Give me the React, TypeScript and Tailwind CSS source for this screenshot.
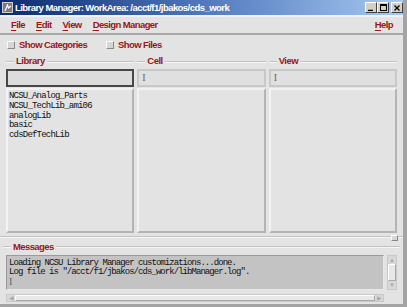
import React from 'react'

const menus = ['File', 'Edit', 'View', 'Design Manager']
const libraries = ['NCSU_Analog_Parts', 'NCSU_TechLib_ami06', 'analogLib', 'basic', 'cdsDefTechLib']
const messages = [
  'Loading NCSU Library Manager customizations...done.',
  'Log file is "/acct/f1/jbakos/cds_work/libManager.log".',
]

function Underlined({ text }: { text: string }) {
  return (
    <span>
      <span className="underline decoration-1 underline-offset-[2px]">{text[0]}</span>
      {text.slice(1)}
    </span>
  )
}

function Cursor() {
  return <span className="font-['Liberation_Serif',serif] text-[10px] leading-none text-[#666]">I</span>
}

function Groove({ className = '' }: { className?: string }) {
  return <div className={'h-[2px] border-t border-t-[#c2c2c2] border-b border-b-[#f6f6f6] ' + className} />
}

function Column({ label, focused, items }: { label: string; focused?: boolean; items?: string[] }) {
  return (
    <div className="flex-1 min-w-0 flex flex-col">
      <div className="h-[15px] flex items-center">
        <Groove className="w-[8px]" />
        <span className="px-[2px] text-[9.5px] font-bold tracking-[-0.5px] text-[#9b1616]">{label}</span>
        <Groove className="flex-1" />
      </div>
      <div
        className={
          focused
            ? 'h-[18px] border-2 border-[#474747] bg-[#dcdcdc]'
            : 'h-[18px] border-2 border-[#c8c8c8] bg-[#e0e0e0] flex items-center pl-[3px]'
        }
      >
        {!focused && <Cursor />}
      </div>
      <div className="flex-1 mt-[1px] border-2 border-t-[#f2f2f2] border-l-[#f2f2f2] border-r-[#b4b4b4] border-b-[#b4b4b4] bg-[#e3e3e3] pt-[2px] pl-[1px] font-['Liberation_Mono',monospace] text-[9px] tracking-[-0.8px] leading-[9.8px] text-[#111]">
        {items?.map((it) => (
          <div key={it}>{it}</div>
        ))}
      </div>
    </div>
  )
}

function CheckToggle({ label }: { label: string }) {
  return (
    <div className="flex items-center gap-[4px]">
      <div className="w-[8px] h-[8px] bg-[#d6d6d6] border border-t-[#fafafa] border-l-[#fafafa] border-r-[#8a8a8a] border-b-[#8a8a8a]" />
      <span>{label}</span>
    </div>
  )
}

function WinButton({ children }: { children: React.ReactNode }) {
  return (
    <div className="w-[12px] h-[11px] bg-[#d4d0c8] border border-t-white border-l-white border-r-[#404040] border-b-[#404040] flex items-center justify-center">
      {children}
    </div>
  )
}

export default function App() {
  return (
    <div className="w-[407px] h-[307px] flex flex-col bg-[#e3e3e3] border-r-[4px] border-r-[#a4a4a4] border-b-[3px] border-b-[#a4a4a4] font-['Liberation_Sans',Arial,sans-serif] overflow-hidden">
      {/* title bar */}
      <div className="h-[17px] shrink-0 flex items-center pl-[2px] bg-gradient-to-r from-[#0b2a6e] via-[#5078bc] to-[#a8caf0] border-b-2 border-b-[#f2f2f2]">
        <div className="w-[11px] h-[11px] bg-[#7d7d7d] border border-[#cfcfcf] flex items-center justify-center">
          <svg width="8" height="8" viewBox="0 0 8 8">
            <path d="M1 7 L3.5 1 L4.5 4 L7 2" stroke="#fff" strokeWidth="1.2" fill="none" />
          </svg>
        </div>
        <span className="ml-[2px] text-[9.5px] font-bold text-white leading-none tracking-[-0.55px]">
          Library Manager: WorkArea: /acct/f1/jbakos/cds_work
        </span>
        <div className="ml-auto flex items-center">
          <WinButton>
            <svg width="6" height="6" viewBox="0 0 6 6"><path d="M0 5.5 H5" stroke="#000" strokeWidth="1.5" /></svg>
          </WinButton>
          <WinButton>
            <svg width="7" height="7" viewBox="0 0 7 7"><rect x="0.5" y="0.5" width="6" height="6" stroke="#000" fill="none" /><path d="M0 1.5 H7" stroke="#000" /></svg>
          </WinButton>
          <div className="ml-[2px]">
            <WinButton>
              <svg width="6" height="6" viewBox="0 0 6 6"><path d="M0.5 0.5 L5.5 5.5 M5.5 0.5 L0.5 5.5" stroke="#000" strokeWidth="1.3" /></svg>
            </WinButton>
          </div>
        </div>
      </div>

      {/* menu bar */}
      <div className="h-[18px] shrink-0 flex items-center pl-[11px] pr-[10px] text-[9.5px] font-bold tracking-[-0.6px] text-[#9b1616] border-b-2 border-b-[#a8a8a8]">
        <div className="flex gap-[11px]">
          {menus.map((m) => (
            <Underlined key={m} text={m} />
          ))}
        </div>
        <div className="ml-auto">
          <Underlined text="Help" />
        </div>
      </div>

      {/* toggles */}
      <div className="h-[19px] shrink-0 flex items-center gap-[19px] pl-[7px] pt-[1px] text-[9.5px] font-bold tracking-[-0.6px] text-[#9b1616]">
        <CheckToggle label="Show Categories" />
        <CheckToggle label="Show Files" />
      </div>

      {/* library / cell / view columns */}
      <div className="flex gap-[3px] h-[179px] shrink-0 px-[6px]">
        <Column label="Library" focused items={libraries} />
        <Column label="Cell" />
        <Column label="View" />
      </div>

      {/* sash */}
      <div className="relative h-[8px] shrink-0 flex items-center">
        <Groove className="flex-1" />
        <div className="absolute right-[5px] top-[2px] w-[7px] h-[6px] bg-[#d6d6d6] border border-t-white border-l-white border-r-[#888] border-b-[#888]" />
      </div>

      {/* messages */}
      <div className="flex-1 min-h-0 flex flex-col px-[6px]">
        <div className="h-[12px] flex items-center -mx-[3px]">
          <Groove className="w-[8px]" />
          <span className="px-[2px] text-[9.5px] font-bold tracking-[-0.6px] text-[#9b1616]">Messages</span>
          <Groove className="flex-1" />
        </div>
        <div className="flex h-[35px] mt-[2px]">
          <div className="flex-1 bg-[#c3c3c3] border border-t-[#9a9a9a] border-l-[#9a9a9a] border-r-[#e8e8e8] border-b-[#e8e8e8] pl-[2px] pt-[3px] font-['Liberation_Mono',monospace] text-[9px] tracking-[-0.95px] leading-[9px] text-[#111] whitespace-pre overflow-hidden">
            {messages.map((m) => (
              <div key={m}>{m}</div>
            ))}
            <Cursor />
          </div>
          <div className="w-[10px] flex flex-col bg-[#d8d8d8] border border-[#c8c8c8] ml-[3px]">
            <div className="h-[8px] flex items-center justify-center text-[6px] leading-none text-[#aaa]">▲</div>
            <div className="flex-1 bg-[#e8e8e8] border border-t-white border-l-white border-r-[#a8a8a8] border-b-[#a8a8a8]" />
            <div className="h-[8px] flex items-center justify-center text-[6px] leading-none text-[#aaa]">▼</div>
          </div>
        </div>
        <div className="flex h-[8px] mt-[4px] mr-[13px] bg-[#d8d8d8] border border-[#c8c8c8]">
          <div className="w-[8px] flex items-center justify-center text-[6px] leading-none text-[#aaa]">◀</div>
          <div className="flex-1 bg-[#e8e8e8] border border-t-white border-l-white border-r-[#a8a8a8] border-b-[#a8a8a8]" />
          <div className="w-[8px] flex items-center justify-center text-[6px] leading-none text-[#aaa]">▶</div>
        </div>
      </div>
    </div>
  )
}
